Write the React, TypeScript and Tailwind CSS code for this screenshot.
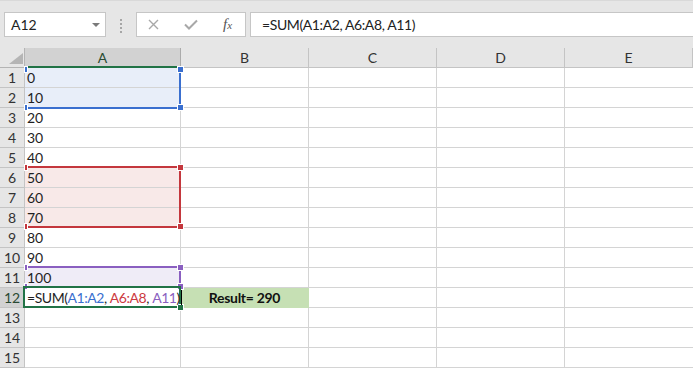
import React from "react";

const colW = ["w-[156px]", "w-[128px]", "w-[128px]", "w-[128px]", "w-[128px]"];
const letters = ["A", "B", "C", "D", "E"];
const values = ["0", "10", "20", "30", "40", "50", "60", "70", "80", "90", "100", "", "", "", ""];

function fillFor(r: number): string {
  if (r === 1 || r === 2) return "bg-[#e8eef9]";
  if (r >= 6 && r <= 8) return "bg-[#f8e9e8]";
  if (r === 11) return "bg-[#efecf7]";
  return "bg-white";
}

function Handle({ x, y, color, w = 7 }: { x: number; y: number; color: string; w?: number }) {
  return (
    <div
      className="absolute border border-white z-30"
      style={{ left: x, top: y, width: w, height: 7, background: color }}
    />
  );
}

function Range({ top, height, color, showTop }: { top: number; height: number; color: string; showTop: boolean }) {
  return (
    <>
      <div
        className="absolute z-20 border-2 border-l-0 pointer-events-none"
        style={{
          left: 24,
          top,
          width: 157,
          height,
          borderColor: color,
          borderTopColor: showTop ? color : "transparent",
        }}
      />
      <Handle x={24} y={top - 2} color={color} w={4} />
      <Handle x={177} y={top - 2} color={color} />
      <Handle x={24} y={top + height - 5} color={color} w={4} />
      <Handle x={177} y={top + height - 5} color={color} />
    </>
  );
}

export default function App() {
  return (
    <div className="w-[693px] h-[370px] overflow-hidden bg-white font-['Lato','Open_Sans',sans-serif] text-[#1f1f1f]">
      {/* toolbar */}
      <div className="h-[48px] bg-[#e6e6e6] border-t border-[#d9d9d9] flex items-start pt-[11px] pl-[4px]">
        <div className="w-[102px] h-[25px] border border-[#c6c6c6] bg-white flex items-center justify-between pl-[6px] pr-[5px]">
          <span className="text-[14px] text-[#222]">A12</span>
          <span className="w-0 h-0 border-l-[4px] border-r-[4px] border-t-[4px] border-l-transparent border-r-transparent border-t-[#7a7a7a]" />
        </div>
        <div className="ml-[14px] mt-[7px] flex flex-col gap-[2px]">
          <span className="w-[2px] h-[2px] bg-[#a6a6a6]" />
          <span className="w-[2px] h-[2px] bg-[#a6a6a6]" />
          <span className="w-[2px] h-[2px] bg-[#a6a6a6]" />
          <span className="w-[2px] h-[2px] bg-[#a6a6a6]" />
        </div>
        <div className="ml-[14px] w-[110px] h-[25px] border border-[#c6c6c6] bg-white flex items-center">
          <svg className="ml-[11px]" width="11" height="11" viewBox="0 0 11 11">
            <path d="M1 1 L10 10 M10 1 L1 10" stroke="#a8a8a8" strokeWidth="1.4" fill="none" />
          </svg>
          <svg className="ml-[25px]" width="14" height="11" viewBox="0 0 14 11">
            <path d="M1 5.5 L5 9.5 L13 1.5" stroke="#a8a8a8" strokeWidth="2" fill="none" />
          </svg>
          <span className="ml-[25px] font-['Liberation_Serif',serif] italic text-[15px] text-[#555] leading-none">
            f<span className="text-[11px]">x</span>
          </span>
        </div>
        <div className="ml-[4px] flex-1 h-[25px] border border-r-0 border-[#c6c6c6] bg-white flex items-center pl-[11px]">
          <span className="text-[14px] text-[#222] tracking-[-0.4px]">=SUM(A1:A2, A6:A8, A11)</span>
        </div>
      </div>

      {/* grid */}
      <div className="relative">
        {/* header row */}
        <div className="flex h-[20px]">
          <div className="w-[25px] h-[20px] bg-[#e6e6e6] border-r border-b border-[#b4b4b4] relative">
            <svg className="absolute left-[9px] top-[5px]" width="14" height="11" viewBox="0 0 14 11">
              <path d="M14 0 L14 11 L0 11 Z" fill="#b5b5b5" />
            </svg>
          </div>
          {letters.map((l, i) => (
            <div
              key={l}
              className={`${colW[i]} h-[20px] flex items-center justify-center text-[14px] border-r ${
                i === 0
                  ? "bg-[#d2d2d2] border-b-2 border-b-[#217346] border-r-[#ababab] text-[#2a4a33]"
                  : "bg-[#e6e6e6] border-b border-[#c4c4c4] text-[#333]"
              }`}
            >
              {l}
            </div>
          ))}
        </div>

        {/* rows */}
        {values.map((v, idx) => {
          const r = idx + 1;
          const active = r === 12;
          return (
            <div key={r} className="flex h-[20px]">
              <div
                className={`w-[25px] h-[20px] border-b border-r flex items-center justify-center text-[14px] ${
                  active
                    ? "bg-[#d2d2d2] border-b-[#c4c4c4] border-r-[#217346] text-[#2a4a33]"
                    : "bg-[#e6e6e6] border-[#c4c4c4] text-[#333]"
                }`}
              >
                {r}
              </div>
              <div
                className={`w-[156px] h-[20px] border-r border-b border-[#d4d4d4] ${fillFor(r)} text-[14px] leading-[19px] pl-[2px] whitespace-nowrap overflow-visible`}
              >
                {active ? (
                  <span className="relative z-40 inline-flex items-center tracking-[-0.45px]">
                    <span>=SUM(</span>
                    <span className="text-[#3a6fcf]">A1:A2</span>
                    <span>,&nbsp;</span>
                    <span className="text-[#cc3a3f]">A6:A8</span>
                    <span>,&nbsp;</span>
                    <span className="text-[#8a5fc0]">A11</span>
                    <span>)</span>
                    <span className="inline-block w-[1px] h-[15px] bg-black ml-[1px]" />
                  </span>
                ) : (
                  v
                )}
              </div>
              <div
                className={`w-[128px] h-[20px] border-r border-b ${
                  active
                    ? "bg-[#c6e0b4] border-[#c6e0b4] flex items-center justify-center font-bold text-[14px] text-[#111] tracking-[-0.3px]"
                    : "border-[#d4d4d4]"
                }`}
              >
                {active ? "Result= 290" : null}
              </div>
              <div className="w-[128px] h-[20px] border-r border-b border-[#d4d4d4]" />
              <div className="w-[128px] h-[20px] border-r border-b border-[#d4d4d4]" />
              <div className="w-[128px] h-[20px] border-b border-[#d4d4d4]" />
            </div>
          );
        })}

        {/* range highlights */}
        <Range top={20} height={41} color="#3a6fcf" showTop={false} />
        <Range top={118} height={62} color="#c4373d" showTop={true} />
        <Range top={218} height={22} color="#8a5fc0" showTop={true} />

        {/* active cell */}
        <div
          className="absolute z-30 border-2 border-[#217346] pointer-events-none"
          style={{ left: 23, top: 238, width: 158, height: 22 }}
        />
        <div
          className="absolute z-30 border border-white bg-[#217346]"
          style={{ left: 177, top: 256, width: 7, height: 7 }}
        />
      </div>
    </div>
  );
}
